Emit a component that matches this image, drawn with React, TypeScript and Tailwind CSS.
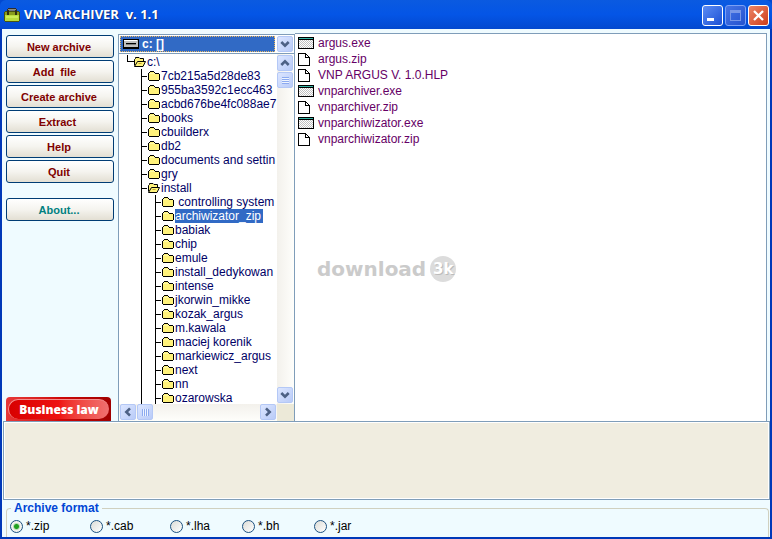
import { useState } from "react";
import type { ReactNode } from "react";

type Folder = { name: string; level: 0 | 1 | 2; open?: boolean };
type FileEntry = { name: string; kind: "exe" | "doc" };

const folders: Folder[] = [
  { name: "c:\\", level: 0, open: true },
  { name: "7cb215a5d28de83", level: 1 },
  { name: "955ba3592c1ecc463", level: 1 },
  { name: "acbd676be4fc088ae7", level: 1 },
  { name: "books", level: 1 },
  { name: "cbuilderx", level: 1 },
  { name: "db2", level: 1 },
  { name: "documents and settin", level: 1 },
  { name: "gry", level: 1 },
  { name: "install", level: 1, open: true },
  { name: " controlling system", level: 2 },
  { name: "archiwizator_zip", level: 2 },
  { name: "babiak", level: 2 },
  { name: "chip", level: 2 },
  { name: "emule", level: 2 },
  { name: "install_dedykowan", level: 2 },
  { name: "intense", level: 2 },
  { name: "jkorwin_mikke", level: 2 },
  { name: "kozak_argus", level: 2 },
  { name: "m.kawala", level: 2 },
  { name: "maciej korenik", level: 2 },
  { name: "markiewicz_argus", level: 2 },
  { name: "next", level: 2 },
  { name: "nn", level: 2 },
  { name: "ozarowska", level: 2 },
];

const files: FileEntry[] = [
  { name: "argus.exe", kind: "exe" },
  { name: "argus.zip", kind: "doc" },
  { name: "VNP ARGUS V. 1.0.HLP", kind: "doc" },
  { name: "vnparchiver.exe", kind: "exe" },
  { name: "vnparchiver.zip", kind: "doc" },
  { name: "vnparchiwizator.exe", kind: "exe" },
  { name: "vnparchiwizator.zip", kind: "doc" },
];

const formats = [
  { name: "zip", width: "w-20" },
  { name: "cab", width: "w-20" },
  { name: "lha", width: "w-[72px]" },
  { name: "bh", width: "w-[72px]" },
  { name: "jar", width: "w-[72px]" },
];

function ToolboxIcon() {
  return (
    <svg width="16" height="16" viewBox="0 0 16 16" shapeRendering="crispEdges" aria-hidden="true">
      <path d="M4 1h8v1h1v4H3V2h1z" fill="#2c2c2c" />
      <path d="M4 2h8v1H4z" fill="#8c8c80" />
      <path d="M5 3h6v2H5z" fill="#6c7484" />
      <path d="M1 4h14v1h1v9h-1v1H1v-1H0V5h1z" fill="#4a5410" />
      <rect x="1" y="5" width="14" height="3" fill="#8a9c1c" />
      <rect x="1" y="8" width="14" height="6" fill="#b9dc3c" />
      <rect x="2" y="9" width="12" height="2" fill="#cdec58" />
      <rect x="3" y="4" width="2" height="4" fill="#303010" />
      <rect x="11" y="4" width="2" height="4" fill="#303010" />
    </svg>
  );
}

function FolderIcon() {
  return (
    <svg className="shrink-0" width="12" height="14" viewBox="0 0 12 14" shapeRendering="crispEdges" aria-hidden="true">
      <path d="M2 2h4v1h1v1h4v1h1v6h-1v1H1v-1H0V4h1V3h1z" fill="#000" />
      <path d="M2 3h4v1H2zM1 5h10v6H1z" fill="#fff27a" />
      <path d="M1 4h6v1H1z" fill="#fff9a8" />
    </svg>
  );
}

function OpenFolderIcon() {
  return (
    <svg className="shrink-0" width="12" height="14" viewBox="0 0 12 14" aria-hidden="true">
      <path d="M.5 10.500V4.500l1-1V2.500h3.500l1 1h3.500v3" fill="#fff27a" stroke="#000" />
      <path d="M.5 11.500L3.500 6.500h8L9 11.500z" fill="#fff27a" stroke="#000" />
      <path d="M4.500 8.500h3" stroke="#c0a820" />
    </svg>
  );
}

function ExeIcon() {
  return (
    <svg width="16" height="14" viewBox="0 0 16 14" shapeRendering="crispEdges" aria-hidden="true">
      <defs>
        <pattern id="dots" width="2" height="2" patternUnits="userSpaceOnUse">
          <rect width="2" height="2" fill="#fff" />
          <rect width="1" height="1" fill="#c0c0c0" />
          <rect x="1" y="1" width="1" height="1" fill="#c0c0c0" />
        </pattern>
      </defs>
      <rect x="0" y="1" width="16" height="12" fill="#000" />
      <rect x="1" y="2" width="14" height="1" fill="#35b5a5" />
      <rect x="1" y="4" width="14" height="8" fill="url(#dots)" />
    </svg>
  );
}

function DocIcon() {
  return (
    <svg width="16" height="14" viewBox="0 0 16 14" shapeRendering="crispEdges" aria-hidden="true">
      <path d="M0 1h8v1h1v1h1v1h1v1h1v9H0z" fill="#000" />
      <path d="M1 2h6v4h4v7H1z" fill="#fff" />
      <path d="M8 3h1v1h1v1H8z" fill="#fff" />
    </svg>
  );
}

function DriveIcon() {
  return (
    <svg width="16" height="10" viewBox="0 0 16 10" shapeRendering="crispEdges" aria-hidden="true">
      <rect width="16" height="10" fill="#000" />
      <rect x="1" y="1" width="14" height="7" fill="#c0c0c0" />
      <rect x="1" y="1" width="13" height="1" fill="#fff" />
      <rect x="3" y="4" width="10" height="1" fill="#000" />
      <rect x="3" y="5" width="10" height="1" fill="#808080" />
    </svg>
  );
}

function Chevron({ turn }: { turn: string }) {
  return (
    <svg className={turn} width="10" height="10" viewBox="0 0 10 10" aria-hidden="true">
      <path d="M1.300 3L5 6.700L8.700 3" fill="none" stroke="#4d6185" strokeWidth="2.600" />
    </svg>
  );
}

const scrollFace =
  "flex items-center justify-center rounded-xs border border-[#b4c8f6] bg-linear-to-br from-[#dce6ff] to-[#b9cbf8]";

function ScrollButton({ label, turn }: { label: string; turn: string }) {
  return (
    <button type="button" aria-label={label} className={`size-4 shrink-0 ${scrollFace}`}>
      <Chevron turn={turn} />
    </button>
  );
}

function CommandButton({ children, tone = "text-[#800000]" }: { children: ReactNode; tone?: string }) {
  return (
    <button
      type="button"
      className={`flex h-[23px] w-full items-center justify-center rounded-[3px] border border-[#003c74] bg-linear-to-b from-white via-[#f5f4ef] to-[#e3dfd3] pt-px pr-[2px] text-[11px] leading-5 font-bold whitespace-pre ${tone}`}
    >
      {children}
    </button>
  );
}

function Branch() {
  return (
    <span className="flex h-full w-[7px] shrink-0 items-center border-l border-black">
      <span className="h-px w-[5px] bg-black" />
    </span>
  );
}

function FolderRow({ folder, selected, onSelect }: { folder: Folder; selected: boolean; onSelect: () => void }) {
  return (
    <li className="h-[14px]">
      <button type="button" onClick={onSelect} className="flex h-full items-center text-left whitespace-pre">
        {folder.level === 0 && (
          <span className="ml-[7px] h-[7px] w-[7px] shrink-0 self-start border-b border-l border-black" />
        )}
        {folder.level === 1 && (
          <span className="ml-[21px] flex h-full">
            <Branch />
          </span>
        )}
        {folder.level === 2 && (
          <span className="ml-[21px] flex h-full">
            <span className="h-full w-[14px] border-l border-black" />
            <Branch />
          </span>
        )}
        {folder.open ? <OpenFolderIcon /> : <FolderIcon />}
        <span
          className={`ml-px h-[14px] pr-[2px] leading-[14px] ${selected ? "bg-[#316ac5] text-white" : "text-[#000066]"}`}
        >
          {folder.name}
        </span>
      </button>
    </li>
  );
}

function TitleBar() {
  return (
    <header className="flex h-[29px] shrink-0 items-center rounded-t-md bg-linear-to-b from-[#0b5ae0] via-[#0455e6] to-[#0348cf] pr-[3px] pl-1">
      <ToolboxIcon />
      <h1 className="ml-1 flex-1 pt-px font-['Open_Sans','Noto_Sans',sans-serif] text-[13px] font-bold whitespace-pre text-white [text-shadow:1px_1px_#10307c]">
        VNP ARCHIVER  v. 1.1
      </h1>
      <div className="flex gap-[2px] pt-px">
        <button
          type="button"
          aria-label="Minimize"
          className="size-[21px] rounded-[3px] border border-white bg-linear-to-br from-[#5c8cf4] to-[#1c4fd4]"
        >
          <svg width="19" height="19" viewBox="0 0 19 19" aria-hidden="true">
            <rect x="4" y="12" width="7" height="3" fill="#fff" />
          </svg>
        </button>
        <button
          type="button"
          aria-label="Maximize"
          disabled
          className="size-[21px] rounded-[3px] border border-[#7ba0f5] bg-linear-to-br from-[#4674e6] to-[#2452cf]"
        >
          <svg width="19" height="19" viewBox="0 0 19 19" shapeRendering="crispEdges" aria-hidden="true">
            <path d="M4 4h11v11H4zM5 7v7h9V7z" fill="#7897e8" fillRule="evenodd" />
          </svg>
        </button>
        <button
          type="button"
          aria-label="Close"
          className="size-[21px] rounded-[3px] border border-white bg-linear-to-br from-[#eb8465] to-[#cf3a14]"
        >
          <svg width="19" height="19" viewBox="0 0 19 19" aria-hidden="true">
            <path d="M5 5l9 9M14 5l-9 9" stroke="#fff" strokeWidth="2.300" />
          </svg>
        </button>
      </div>
    </header>
  );
}

function FolderPanel() {
  const [current, setCurrent] = useState("archiwizator_zip");
  return (
    <section aria-label="Folders" className="mt-px flex w-[177px] shrink-0 flex-col border-x border-t border-[#7f9db9] bg-white">
      <div className="relative flex h-[19px] shrink-0 items-center border-b border-[#7f9db9] p-px">
        <select
          aria-label="Drive"
          className="h-4 min-w-0 flex-1 appearance-none border border-dotted border-[#e8b860] bg-[#316ac5] pl-[21px] text-[12px] leading-[14px] font-bold text-white"
        >
          <option>c: []</option>
        </select>
        <span className="pointer-events-none absolute top-1 left-1">
          <DriveIcon />
        </span>
        <span className={`pointer-events-none ml-[2px] size-4 shrink-0 ${scrollFace}`}>
          <Chevron turn="" />
        </span>
      </div>
      <div className="flex min-h-0 flex-1">
        <ul className="ml-px min-w-0 flex-1 overflow-hidden pt-px">
          {folders.map((folder) => (
            <FolderRow
              key={folder.name}
              folder={folder}
              selected={folder.name === current}
              onSelect={() => setCurrent(folder.name)}
            />
          ))}
        </ul>
        <div className="flex w-[17px] shrink-0 flex-col bg-linear-to-r from-[#f3f1ec] to-[#fefefb] pt-px pb-px">
          <ScrollButton label="Scroll up" turn="rotate-180" />
          <div className={`mt-px h-4 w-4 shrink-0 ${scrollFace}`}>
            <span className="h-[7px] w-[7px] bg-[repeating-linear-gradient(to_bottom,#8caaf0_0_1px,#eef4fe_1px_2px)]" />
          </div>
          <div className="flex-1" />
          <ScrollButton label="Scroll down" turn="" />
        </div>
      </div>
      <div className="flex h-[17px] shrink-0 items-start bg-linear-to-b from-[#f3f1ec] to-[#fefefb] pl-px">
        <ScrollButton label="Scroll left" turn="rotate-90" />
        <div className={`ml-px size-4 shrink-0 ${scrollFace}`}>
          <span className="h-[7px] w-[7px] bg-[repeating-linear-gradient(to_right,#8caaf0_0_1px,#eef4fe_1px_2px)]" />
        </div>
        <div className="flex-1" />
        <ScrollButton label="Scroll right" turn="-rotate-90" />
        <span className="ml-px h-full w-[17px] bg-[#ece9d8]" />
      </div>
    </section>
  );
}

function FilePanel() {
  return (
    <section aria-label="Files" className="relative mr-[3px] min-w-0 flex-1 border-t border-r border-[#7f9db9] bg-white">
      <ul className="pt-px pl-[3px] text-[#660066]">
        {files.map((file) => (
          <li key={file.name} className="flex h-4 items-center gap-1">
            {file.kind === "exe" ? <ExeIcon /> : <DocIcon />}
            <span className="leading-4">{file.name}</span>
          </li>
        ))}
      </ul>
      <div className="pointer-events-none absolute top-[222px] left-[22px] flex items-center gap-1" aria-hidden="true">
        <span className="font-['DejaVu_Sans',sans-serif] text-[20px] leading-6 font-bold text-[#cbcbcb]">download</span>
        <span className="flex size-[26px] items-center justify-center rounded-full bg-[#dcdcdc] font-['DejaVu_Sans',sans-serif] text-[15px] leading-6 font-bold text-white [text-shadow:1px_1px_#bbb]">
          3k
        </span>
      </div>
    </section>
  );
}

export default function App() {
  const [format, setFormat] = useState("zip");
  return (
    <div className="flex h-screen flex-col overflow-hidden bg-[#0348cf] font-['Liberation_Sans',Arial,sans-serif] text-[12px]">
      <TitleBar />
      <main className="flex min-h-0 flex-1 flex-col border-x-2 border-b-2 border-[#0038b8] bg-[#effbff]">
        <div className="flex min-h-0 flex-1 pt-1 pl-1">
          <nav className="mr-1 flex w-[108px] shrink-0 flex-col gap-[2px] pt-[2px]">
            <CommandButton>New archive</CommandButton>
            <CommandButton>{"Add  file   "}</CommandButton>
            <CommandButton>Create archive</CommandButton>
            <CommandButton>{"Extract "}</CommandButton>
            <CommandButton>Help</CommandButton>
            <CommandButton>Quit</CommandButton>
            <div className="mt-[13px]">
              <CommandButton tone="text-[#008080]">About...</CommandButton>
            </div>
            <a
              href="#business-law"
              className="mt-auto flex h-6 w-[105px] items-center justify-center rounded-t-sm bg-linear-to-r from-[#e83838] via-[#d00808] to-[#a00000] p-[2px]"
            >
              <span className="flex h-full w-full items-center justify-center rounded-full border-t border-l border-[#f49090] bg-linear-to-r from-[#d80000] via-[#ee1111] to-[#f07070] font-['Open_Sans',sans-serif] text-[12px] leading-4 font-extrabold text-white">
                Business law
              </span>
            </a>
          </nav>
          <FolderPanel />
          <FilePanel />
        </div>
        <div className="ml-px h-[79px] shrink-0 border border-[#7f9db9] bg-[#f0ede0] ring-1 ring-white ring-inset" />
        <fieldset className="mx-1 mr-px h-[37px] shrink-0 rounded-t-sm border-x border-t border-[#d0d0bf] pt-px pl-[3px]">
          <legend className="ml-px px-[3px] text-[12px] leading-4 font-bold text-[#0046d5]">Archive format</legend>
          <div className="flex">
            {formats.map(({ name, width }) => (
              <label key={name} className={`flex h-[18px] items-center gap-[3px] text-black ${width}`}>
                <input
                  type="radio"
                  name="format"
                  value={name}
                  checked={format === name}
                  onChange={() => setFormat(name)}
                  className="size-[13px] appearance-none rounded-full border border-[#1c5180] bg-linear-to-br from-[#dcdcd7] to-white checked:bg-[radial-gradient(circle,#21a121_0_2px,#b8dcb4_3px,#f4f4f0_4px)]"
                />
                *.{name}
              </label>
            ))}
          </div>
        </fieldset>
      </main>
    </div>
  );
}
